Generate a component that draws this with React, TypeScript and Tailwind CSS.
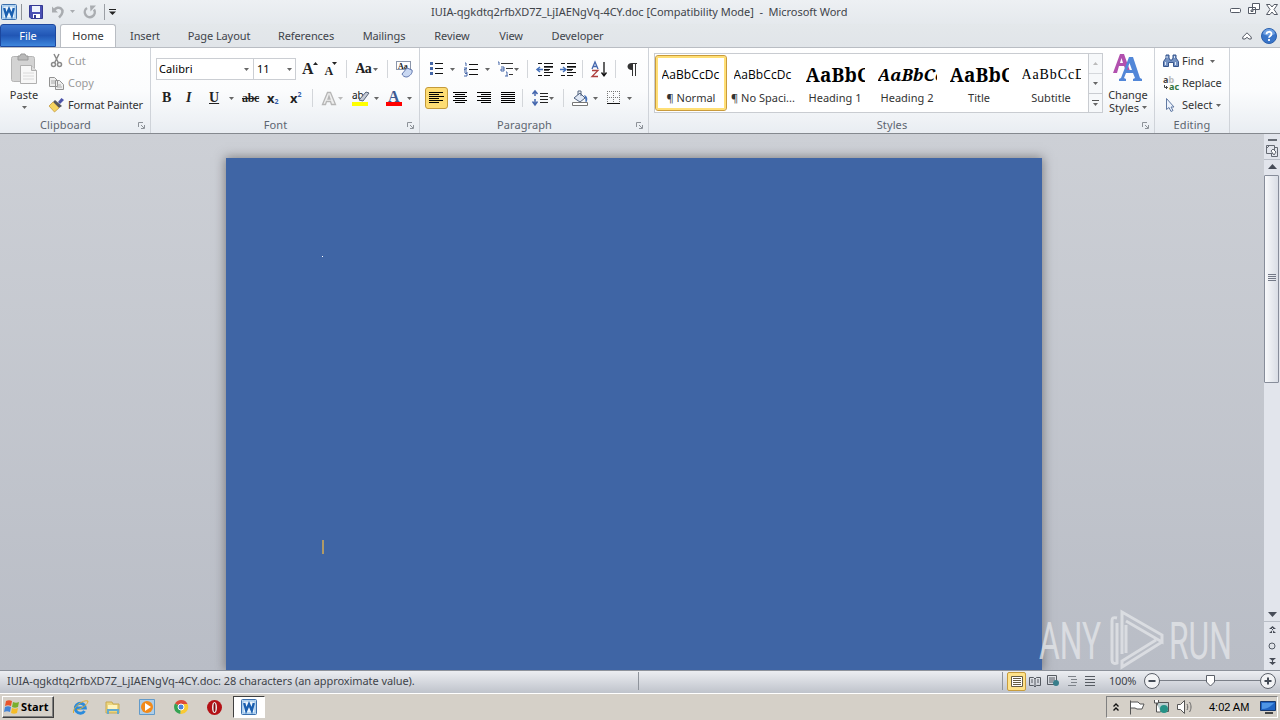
import React from 'react';

type IconProps = { w: number; h: number; className?: string; children: React.ReactNode };

const Icon = ({ w, h, className = '', children }: IconProps) => (
  <svg width={w} height={h} viewBox={`0 0 ${w} ${h}`} className={`block shrink-0 overflow-visible ${className}`} fill="none">
    {children}
  </svg>
);

const Arrow = ({ className = 'text-[#666]' }: { className?: string }) => (
  <Icon w={5} h={3} className={className}>
    <path d="M0 0h5L2.5 3z" fill="currentColor" />
  </Icon>
);

const Sep = () => <div className="h-[18px] w-px shrink-0 bg-[#d3d6da]" />;

const WordLogo = () => (
  <Icon w={16} h={16}>
    <rect x=".5" y=".5" width="15" height="15" rx="1" fill="#cfe4f7" stroke="#3a6fae" />
    <rect x="2" y="2" width="12" height="12" fill="#eef6fd" stroke="#8dbbe6" />
    <path d="M3.2 4 5.2 11.5 8 5l2.8 6.5L12.8 4" stroke="#1a5fb0" strokeWidth="2.4" />
  </Icon>
);

const Launcher = () => (
  <Icon w={7} h={7}>
    <path d="M.5 5V.5H5" stroke="#8d9299" />
    <path d="M3 3l3 3M6.5 3v3.500H3" stroke="#8d9299" />
  </Icon>
);

const Lines = ({ rows }: { rows: number[][] }) => (
  <Icon w={15} h={12}>
    {rows.map(([x, w], i) => (
      <rect key={i} x={x} y={i * 2} width={w} height="1" fill="#000" />
    ))}
  </Icon>
);

const leftRows = [[0, 14], [0, 10], [0, 15], [0, 10], [0, 14], [0, 10]];
const centerRows = [[0, 14], [2, 10], [0, 14], [2, 10], [0, 14], [2, 10]];
const rightRows = [[0, 14], [4, 10], [0, 14], [4, 10], [0, 14], [4, 10]];
const fullRows = [[0, 14], [0, 14], [0, 14], [0, 14], [0, 14], [0, 14]];

type GroupProps = { label: string; className: string; launcher?: boolean; children: React.ReactNode };

const Group = ({ label, className, launcher = true, children }: GroupProps) => (
  <div className={`flex h-full shrink-0 flex-col border-r border-[#cfd3d9] ${className}`}>
    <div className="h-[69px] shrink-0">{children}</div>
    <div className="flex h-[16px] items-center text-[#5d6570]">
      <span className="flex-1 text-center tracking-[0.1px]">{label}</span>
      {launcher && (
        <span className="w-[19px] pl-[7px]">
          <Launcher />
        </span>
      )}
    </div>
  </div>
);

const tabs = [
  { name: 'Insert', className: 'ml-[14px] w-[30px]' },
  { name: 'Page Layout', className: 'ml-7 w-[62px]' },
  { name: 'References', className: 'ml-7 w-14' },
  { name: 'Mailings', className: 'ml-7 w-11' },
  { name: 'Review', className: 'ml-7 w-9' },
  { name: 'View', className: 'ml-7 w-[26px]' },
  { name: 'Developer', className: 'ml-[27px] w-[53px]' },
];

const TitleBar = () => (
  <div className="flex h-6 items-start bg-linear-to-b from-[#edf0f3] to-[#e5e9ed]">
    <div className="flex h-6 w-[430px] items-center pb-px pl-px">
      <WordLogo />
      <div className="ml-1 h-4 w-px bg-[#8f9499]" />
      <Icon w={14} h={14} className="ml-[7px]">
        <path d="M.5.5h13v13H2L.5 12z" fill="#4a50b3" stroke="#343992" />
        <path d="M3 1h8v6H3z" fill="#eef3fc" />
        <path d="M4 9h7v4H4z" fill="#fff" />
        <path d="M5 10h2v3H5z" fill="#343992" />
      </Icon>
      <Icon w={14} h={14} className="ml-2">
        <path d="M1 1.5v6h6z" fill="#a9acb0" />
        <path d="M3 5.5C5 2.500 8 2 10 3.500s2.500 5-2 9" stroke="#a9acb0" strokeWidth="2.5" />
      </Icon>
      <Arrow className="ml-[5px] text-[#a9acb0]" />
      <Icon w={14} h={14} className="ml-[8px]">
        <path d="M4 3a5 5 0 1 0 7 1.500" stroke="#aaadb1" strokeWidth="2.5" />
        <path d="M7 .5h6l-5.500 6z" fill="#aaadb1" />
      </Icon>
      <div className="ml-[7px] h-4 w-px bg-[#9b9fa5]" />
      <Icon w={7} h={6} className="ml-1">
        <path d="M0 .5h7" stroke="#222" />
        <path d="M0 2.5h7L3.500 6z" fill="#222" />
      </Icon>
    </div>
    <div className="flex h-6 w-[420px] items-center whitespace-pre pl-px text-[#3f444a]">
      <span className="tracking-[-0.04px]">IUIA-qgkdtq2rfbXD7Z_LjIAENgVq-4CY.doc [Compatibility Mode]  -  Microsoft Word</span>
    </div>
    <div className="ml-auto flex items-center gap-[6px] pt-[3px] pr-[2px]">
      <Icon w={12} h={12}>
        <rect x=".5" y="5.5" width="10" height="4" rx="1" fill="#fff" stroke="#555b66" />
      </Icon>
      <Icon w={12} h={12}>
        <path d="M4.5.5h7v6h-7zM.5 4.500h7v6h-7z" fill="#fff" stroke="#555b66" />
        <path d="M3 7h2v1.500H3z" stroke="#555b66" />
      </Icon>
      <Icon w={12} h={11}>
        <path d="M.5.5H4l2 2.500L8 .5h3.500L8 5.500l3.500 5H8L6 8l-2 2.500H.5l3.500-5z" fill="#fff" stroke="#555b66" />
      </Icon>
    </div>
  </div>
);

const TabBar = () => (
  <div className="flex h-[23px] bg-linear-to-b from-[#e4e8eb] to-[#e1e5e9] text-[#3f444a]">
    <div className="flex h-full w-14 items-center justify-center rounded-t-[3px] border border-[#1c479e] bg-linear-to-b from-[#3c75ce] via-[#2156b5] to-[#3e86dc] text-white">
      File
    </div>
    <div className="ml-1 flex h-6 w-14 items-center justify-center rounded-t-[3px] border border-b-0 border-[#b9bdc3] bg-white pb-px text-[#333]">
      Home
    </div>
    {tabs.map((tab) => (
      <div
        key={tab.name}
        className={`flex h-full items-center justify-center whitespace-nowrap tracking-[-0.1px] ${tab.className}`}
      >
        {tab.name}
      </div>
    ))}
    <div className="ml-auto flex items-center gap-[9px] pr-[3px]">
      <Icon w={10} h={8}>
        <path d="M.8 5 5 .8 9.200 5v2H7L5 5.300 3 7H.8z" fill="#fff" stroke="#555b66" />
      </Icon>
      <Icon w={16} h={16}>
        <circle cx="8" cy="8" r="7.5" fill="#3975c9" stroke="#2b60ac" />
        <path d="M2 6a6 5 0 0 1 12 0c-3 2-8 2-12 0z" fill="#6ea0e2" />
        <path d="M5.5 6.200C5.500 3 10.500 3 10.500 6c0 2-2.500 1.800-2.500 3.800M8 11v2" stroke="#fff" strokeWidth="1.8" />
      </Icon>
    </div>
  </div>
);

const ClipboardGroup = () => (
  <Group label="Clipboard" className="w-[151px]">
    <div className="flex h-full">
      <div className="flex w-12 flex-col items-center pt-[5px]">
        <Icon w={28} h={31}>
          <rect x="1.5" y="3.5" width="23" height="25" rx="2" fill="#d3d3d3" stroke="#b5b5b5" />
          <path d="M8 3h2l1-2h4l1 2h2v4H8z" fill="#b9b9b9" stroke="#999" />
          <path d="M10.5 12.500h11l5 5v13h-16z" fill="#f7f7f7" stroke="#b0b0b0" />
          <path d="M21.5 12.500v5h5" fill="#ddd" stroke="#b0b0b0" />
          <path d="M13 20h11M13 23h11M13 26h11" stroke="#dadada" />
        </Icon>
        <span className="mt-[3px] leading-[15px] text-[#333]">Paste</span>
        <Arrow className="mt-[4px] text-[#666]" />
      </div>
      <div className="flex flex-col pt-[2px] pl-[1px] text-[#9a9a9a]">
        <div className="flex h-[22px] items-center gap-1 pl-px">
          <Icon w={14} h={14}>
            <path d="M4 0l4.500 9M9 0 4.500 9" stroke="#8a8a8a" strokeWidth="1.5" />
            <circle cx="3.5" cy="10.5" r="2" stroke="#8a8a8a" strokeWidth="1.5" />
            <circle cx="9.5" cy="10.5" r="2" stroke="#8a8a8a" strokeWidth="1.5" />
          </Icon>
          Cut
        </div>
        <div className="flex h-[22px] items-center gap-1">
          <Icon w={15} h={14}>
            <path d="M.5 1.500h5l3 3v6h-8zM6.500 4.500h4l4 4v5h-8z" fill="#eee" stroke="#929292" />
            <path d="M2 5h4M2 7h4M8 9h4M8 11h5" stroke="#aaa" />
          </Icon>
          Copy
        </div>
        <div className="flex h-[22px] items-center gap-1 text-[#333]">
          <Icon w={15} h={14}>
            <path d="M9 4 12.500 0 15 2l-4 4z" fill="#4c54a9" />
            <path d="M6 2l7 6-3 2-6-6z" fill="#55575e" />
            <path d="M4 4l6 6-4.500 4L0 8z" fill="#f6d460" stroke="#bd923b" strokeWidth=".7" />
          </Icon>
          <span className="tracking-[-0.18px]">Format Painter</span>
        </div>
      </div>
    </div>
  </Group>
);

const glyph = 'font-[Liberation_Serif,serif] font-bold text-[#222]';

const FontGroup = () => (
  <Group label="Font" className="w-[269px]">
    <div className="flex h-[42px] items-center pl-[5px] text-black">
      <div className="flex h-[22px] w-[98px] items-center justify-between border border-[#cbced3] bg-white pr-1 pl-[2px]">
        <span className="tracking-[0.1px]">Calibri</span>
        <Arrow />
      </div>
      <div className="-ml-px flex h-[22px] w-[43px] items-center justify-between border border-[#cbced3] bg-white pr-[3px] pl-[3px]">
        11
        <Arrow />
      </div>
      <span className={`ml-[6px] flex text-[16px] leading-[18px] ${glyph}`}>
        A
        <Icon w={5} h={3} className="mt-[2px] -ml-px">
          <path d="M0 3h5L2.500 0z" fill="#222" />
        </Icon>
      </span>
      <span className={`ml-[7px] flex pt-[3px] text-[12px] leading-[16px] ${glyph}`}>
        A
        <Icon w={5} h={3} className="-mt-px -ml-px">
          <path d="M0 0h5L2.500 3z" fill="#222" />
        </Icon>
      </span>
      <div className="ml-[9px]"><Sep /></div>
      <span className={`ml-[8px] w-[18px] text-[14px] tracking-[-0.5px] ${glyph}`}>Aa</span>
      <Arrow />
      <div className="ml-[9px]"><Sep /></div>
      <Icon w={17} h={17} className="ml-2">
        <rect x=".5" y=".5" width="14" height="8" fill="#fff" stroke="#8b96aa" />
        <text x="2" y="8" fontSize="8" fontFamily="Liberation Serif, serif" fontWeight="bold" fill="#222">Aa</text>
        <path d="M6 13l5-6 5 2c1 3-2 6-5 7-3 0-4-1-5-3z" fill="#c9d8f2" stroke="#6278ae" />
      </Icon>
    </div>
    <div className="flex h-[16px] items-center pl-[11px]">
      <span className={`w-[10px] text-[14px] ${glyph}`}>B</span>
      <span className={`ml-[14px] w-[8px] text-[14px] italic ${glyph}`}>I</span>
      <span className={`ml-[15px] w-[11px] text-[14px] underline ${glyph}`}>U</span>
      <Arrow className="ml-[9px] text-[#666]" />
      <span className={`ml-[8px] w-[17px] text-[12px] tracking-[-0.3px] line-through ${glyph}`}>abc</span>
      <span className="ml-[8px] flex w-[14px] items-end text-[13px] leading-[14px] font-bold text-[#222]">
        x<span className="text-[7px] leading-[7px] text-[#315aa7]">2</span>
      </span>
      <span className="ml-[9px] flex w-[13px] items-start text-[13px] leading-[14px] font-bold text-[#222]">
        x<span className="text-[7px] leading-[7px] text-[#315aa7]">2</span>
      </span>
      <div className="ml-[9px]"><Sep /></div>
      <Icon w={16} h={15} className="ml-2">
        <path d="M1.5 13.500 6.500 1.500h3l5 12h-4l-1-3h-4l-1 3zM7 8h2L8 5z" fill="#eee" stroke="#b6b6b6" strokeWidth="1.3" />
      </Icon>
      <Arrow className="ml-px text-[#bbb]" />
      <Icon w={18} h={17} className="ml-[9px]">
        <text x="0" y="9" fontSize="10" fontFamily="Noto Sans, sans-serif" fill="#111">ab</text>
        <path d="M7 10 14 2l3 1-6 8z" fill="#c5cbd7" stroke="#596477" />
        <path d="M0 12h16v4H0z" fill="#ff0" />
      </Icon>
      <Arrow className="ml-[4px] text-[#666]" />
      <Icon w={16} h={17} className="ml-[7px]">
        <text x="2" y="12" fontSize="16" fontFamily="Liberation Serif, serif" fontWeight="bold" fill="#3e5b92">A</text>
        <path d="M0 12h16v4H0z" fill="#f00" />
      </Icon>
      <Arrow className="ml-[5px] text-[#666]" />
    </div>
  </Group>
);

const Indent = ({ right = false }: { right?: boolean }) => (
  <Icon w={16} h={13}>
    <path d="M1 .5h4M7 .5h9M7 3.500h9M7 6.500h6M7 9.500h9M1 12.500h4M7 12.500h6" stroke="#111" />
    <path d="M7 4.500h9M7 7.500h5" stroke="#111" strokeWidth=".7" />
    <path d={right ? 'M0 6.5h5M3 4l3 2.5L3 9' : 'M6 6.5H1M3 4 0 6.5 3 9'} stroke="#4470b9" strokeWidth="1.5" />
  </Icon>
);

const ParagraphGroup = () => (
  <Group label="Paragraph" className="w-[229px]">
    <div className="flex h-[42px] items-center pl-[10px]">
      <Icon w={14} h={14}>
        <path d="M0 0h3v3H0zM0 5h3v3H0zM0 10h3v3H0z" fill="#4567a8" />
        <path d="M5 1.500h8M5 6.500h8M5 11.500h8" stroke="#111" />
      </Icon>
      <Arrow className="ml-[6px] text-[#666]" />
      <Icon w={15} h={15} className="ml-[9px]">
        <path d="M1 1h1v3M0 6h3L0 8h3M0 10h3v1.500H1h2V14H0" stroke="#4567a8" />
        <path d="M5 2.500h9M5 7.500h9M5 12.500h9" stroke="#111" />
      </Icon>
      <Arrow className="ml-[6px] text-[#666]" />
      <Icon w={16} h={15} className="ml-[7px]">
        <path d="M1 0h1v3M4 5h3v4H4V7h3M9 10h1v4M8 14h3" stroke="#4567a8" />
        <path d="M4 1.500h12M9 6.500h7M12 12.500h4" stroke="#333" />
      </Icon>
      <Arrow className="ml-px text-[#666]" />
      <div className="ml-[8px]"><Sep /></div>
      <div className="ml-[9px] flex gap-[7px]">
        <Indent />
        <Indent right />
      </div>
      <div className="ml-[6px]"><Sep /></div>
      <Icon w={17} h={17} className="ml-[8px]">
        <path d="M1 8 4 1l3 7M2 5.500h4" stroke="#4567ae" strokeWidth="1.3" />
        <path d="M1 9.500h6l-6 6h6" stroke="#ae403f" strokeWidth="1.3" />
        <path d="M13 1v13M10.500 11.500 13 15l2.500-3.500" stroke="#111" strokeWidth="1.3" />
      </Icon>
      <div className="ml-[7px]"><Sep /></div>
      <Icon w={11} h={13} className="ml-[11px]">
        <path d="M5 0h5v1H9v12H8V1H6v12H5V7C-1 7-1 0 5 0z" fill="#333" />
      </Icon>
    </div>
    <div className="flex h-[16px] items-center pl-[5px]">
      <div className="flex h-[22px] w-[23px] shrink-0 items-center justify-center rounded-[3px] border border-[#c49a3a] bg-[#fddc73]">
        <Lines rows={leftRows} />
      </div>
      <div className="ml-[5px] flex gap-[9px]">
        <Lines rows={centerRows} />
        <Lines rows={rightRows} />
        <Lines rows={fullRows} />
      </div>
      <div className="ml-[6px]"><Sep /></div>
      <Icon w={16} h={16} className="ml-[9px]">
        <path d="M3 1v5M.5 4 3 1l2.500 3M3 9v5M.5 11.500 3 15l2.500-3.500" stroke="#4567ae" strokeWidth="1.5" />
        <path d="M8 3.500h8M8 6.500h8M8 9.500h8M8 12.500h8" stroke="#222" />
      </Icon>
      <Arrow className="ml-px text-[#666]" />
      <div className="ml-[9px]"><Sep /></div>
      <Icon w={17} h={17} className="ml-[8px]">
        <path d="M2 8 8 3l5 5-5 4z" fill="#e0e8f5" stroke="#50627f" />
        <path d="M6 5V1h3v5" stroke="#50627f" />
        <path d="M12 5c4 1 4 5 2 8-1-2 0-4-2-8z" fill="#4470b9" />
        <path d="M.5 12.500h15v3H.5z" fill="#fff" stroke="#777" />
      </Icon>
      <Arrow className="ml-[4px] text-[#666]" />
      <Icon w={14} h={14} className="ml-[9px]">
        <path d="M.5 0v12M6.500 0v12M12.500 0v12M0 .5h13M0 6.500h13" stroke="#777" strokeDasharray="1 1" />
        <path d="M0 12.500h13" stroke="#111" />
      </Icon>
      <Arrow className="ml-[6px] text-[#666]" />
    </div>
  </Group>
);

const styleCards = [
  { name: '¶ Normal', sample: 'AaBbCcDc', className: "font-['Open_Sans',sans-serif] text-[12px] tracking-[0.1px]" },
  { name: '¶ No Spaci...', sample: 'AaBbCcDc', className: "font-['Open_Sans',sans-serif] text-[12px] tracking-[0.1px]" },
  { name: 'Heading 1', sample: 'AaBbC', className: 'font-[Noto_Serif,DejaVu_Serif,serif] text-[19px] font-bold tracking-[0.2px]' },
  { name: 'Heading 2', sample: 'AaBbCc', className: 'font-[Noto_Serif,DejaVu_Serif,serif] text-[17px] font-bold italic' },
  { name: 'Title', sample: 'AaBbC', className: 'font-[Noto_Serif,DejaVu_Serif,serif] text-[19px] font-bold tracking-[0.2px]' },
  { name: 'Subtitle', sample: 'AaBbCcD', className: 'font-[Liberation_Serif,serif] text-[14px] tracking-[0.9px]' },
];

const StylesGroup = () => (
  <Group label="Styles" className="w-[506px]">
    <div className="flex h-full pt-[5px] pl-[5px]">
      <div className="flex h-[60px] w-[449px] border border-[#c9ccd1] bg-white">
        {styleCards.map((card, i) => (
          <div
            key={card.name}
            className={`mt-px flex h-[56px] w-[72px] shrink-0 flex-col items-center ${
              i === 0 ? 'rounded-[3px] border border-[#c99b3c] p-0 inset-ring-2 inset-ring-[#ffdf76]' : 'p-px'
            }`}
          >
            <div className={`flex h-[34px] w-[59px] items-center overflow-hidden pt-[4px] whitespace-nowrap text-black ${card.className}`}>
              {card.sample}
            </div>
            <span className="leading-[15px] text-[#333]">{card.name}</span>
          </div>
        ))}
        <div className="ml-auto flex w-[14px] flex-col border-l border-[#c9ccd1] bg-[#f6f8fa]">
          <div className="flex h-5 items-center justify-center border-b border-[#d5d8dc]">
            <Icon w={5} h={3}>
              <path d="M0 3h5L2.500 0z" fill="#bbb" />
            </Icon>
          </div>
          <div className="flex h-5 items-center justify-center border-b border-[#c9ccd1]">
            <Arrow />
          </div>
          <div className="flex flex-1 flex-col items-center justify-center gap-[2px]">
            <div className="h-px w-[7px] bg-[#555]" />
            <Arrow />
          </div>
        </div>
      </div>
      <div className="flex w-[50px] flex-col items-center leading-[13px] text-[#333]">
        <Icon w={30} h={30}>
          <path d="M0 20 7 1h4l6 17h-4l-2-5H6l-2 7zM7 10h3L8.500 5z" fill="#b150ae" fillRule="evenodd" />
          <path d="M6 28v-2l2-1 8-21h4l7 21 2 1v2h-9v-2l2-1-2-5h-7l-2 5 2 1v2zM14 17h5l-2.500-7z" fill="#5287d8" fillRule="evenodd" />
        </Icon>
        <span className="mt-[5px]">Change</span>
        <span className="flex items-center gap-[3px]">Styles <Arrow /></span>
      </div>
    </div>
  </Group>
);

const EditingGroup = () => (
  <Group label="Editing" className="w-[75px]" launcher={false}>
    <div className="flex flex-col pt-[2px] pl-[8px] text-[#333]">
      <div className="flex h-[22px] items-center">
        <Icon w={16} h={14}>
          <path d="M.5 12.500v-5L3 4V1h3v3l1 2h2l1-2V1h3v3l2.500 3.500v5h-5v-4h-5v4z" fill="#7290c1" stroke="#35548d" />
          <path d="M2.5 8v3M12.500 8v3M4 2v2M11.500 2v2" stroke="#dce6f5" />
        </Icon>
        <span className="ml-[3px]">Find</span>
        <Arrow className="ml-[6px] text-[#666]" />
      </div>
      <div className="flex h-[22px] items-center">
        <Icon w={16} h={15} className="font-[Noto_Sans,sans-serif] font-bold">
          <text x="0" y="7" fontSize="9" fill="#444">a<tspan fill="#bbb">b</tspan></text>
          <text x="6" y="14" fontSize="9" fill="#31753d">ac</text>
          <path d="M1.5 9v2.500h3M3 10l1.500 1.500L3 13" stroke="#444" />
        </Icon>
        <span className="ml-[3px] tracking-[-0.1px]">Replace</span>
      </div>
      <div className="flex h-[22px] items-center">
        <Icon w={16} h={14}>
          <path d="M3.500.5v11l2.500-2 2 4 2-1-2-3.500h3z" fill="#edf3fc" stroke="#6079a3" />
        </Icon>
        <span className="ml-[3px]">Select</span>
        <Arrow className="ml-[3px] text-[#666]" />
      </div>
    </div>
  </Group>
);

const Ribbon = () => (
  <div className="flex h-[87px] border-t border-b border-t-[#b9bdc3] border-b-[#85898f] bg-linear-to-b from-white via-[#fbfcfd] to-[#e9edf2]">
    <ClipboardGroup />
    <FontGroup />
    <ParagraphGroup />
    <StylesGroup />
    <EditingGroup />
  </div>
);

const Scrollbar = () => (
  <div className="flex w-4 shrink-0 flex-col items-center bg-[#e2e5ec]">
    <div className="mt-[5px] h-[2px] w-[9px] bg-[#676c75]" />
    <Icon w={12} h={12} className="mt-[4px]">
      <path d="M.5.5h8v8h-8zM8.500 2.500h3v9h-6v-3" stroke="#656a73" />
      <path d="m1 3 2-2M5 6l2-2 3 3-2 3z" fill="#fff" stroke="#656a73" />
    </Icon>
    <div className="mt-[2px] h-px w-4 bg-[#b9bec7]" />
    <Icon w={9} h={5} className="mt-[4px]">
      <path d="M0 5 4.500 0 9 5z" fill="#484d58" />
    </Icon>
    <div className="mt-[6px] mr-px flex h-[208px] w-[15px] flex-col items-center justify-center gap-px rounded-[1px] border border-[#878d9a] bg-linear-to-r from-[#f8f9fb] to-[#d9dde5] pb-[3px]">
      <div className="h-px w-[8px] bg-[#737987]" />
      <div className="h-px w-[8px] bg-[#737987]" />
      <div className="h-px w-[8px] bg-[#737987]" />
      <div className="h-px w-[8px] bg-[#737987]" />
    </div>
    <Icon w={9} h={5} className="mt-auto">
      <path d="M0 0h9L4.500 5z" fill="#484d58" />
    </Icon>
    <div className="mt-[4px] h-px w-4 bg-[#b9bec7]" />
    <Icon w={7} h={7} className="mt-[4px]">
      <path d="M0 3h7L3.500 0zM0 7h7L3.500 4zM3 2h1v5H3z" fill="#484d58" />
    </Icon>
    <Icon w={8} h={8} className="mt-[9px]">
      <circle cx="4" cy="4" r="3" stroke="#555b66" fill="#dfe2e8" />
    </Icon>
    <Icon w={7} h={7} className="mt-[8px] mb-[5px]">
      <path d="M0 0h7L3.500 3zM0 4h7L3.500 7zM3 0h1v5H3z" fill="#484d58" />
    </Icon>
  </div>
);

const Watermark = () => (
  <Icon w={194} h={62} className="absolute bottom-0 left-[1038px] opacity-75">
    <g fontSize="51" fontFamily="Roboto, sans-serif" fill="#e5e7ea">
      <text x="1" y="51" textLength="62" lengthAdjust="spacingAndGlyphs">ANY</text>
      <text x="131" y="51" textLength="63" lengthAdjust="spacingAndGlyphs">RUN</text>
    </g>
    <path
      d="M79 10c-4-1-5 0-5 3v39c0 3 2 4 5 3V15M84 46V4l40 23v7L88 13M124 34 84 59v-6l34-21M88 17v28"
      stroke="#e5e7ea"
      strokeWidth="3"
    />
  </Icon>
);

const Document = () => (
  <div className="relative flex h-[536px] overflow-hidden bg-linear-to-b from-[#cdd0d6] to-[#b9bdc6]">
    <div className="flex flex-1 pt-6 pl-[226px]">
      <div className="h-[512px] w-[816px] bg-[#3f65a5] pt-[98px] pl-[96px] shadow-[0_0_10px_1px_rgba(70,65,65,0.55)]">
        <div className="h-px w-px bg-white" />
        <div className="mt-[283px] h-[14px] w-[2px] bg-[#b09a67]" />
      </div>
    </div>
    <Scrollbar />
    <Watermark />
  </div>
);

const StatusBar = () => (
  <div className="flex h-[23px] items-center border-t border-[#8d929b] bg-linear-to-b from-[#eceef2] to-[#bfc3cb] pb-[2px] text-[#3f444a]">
    <span className="w-[638px] pl-[7px] tracking-[-0.08px]">IUIA-qgkdtq2rfbXD7Z_LjIAENgVq-4CY.doc: 28 characters (an approximate value).</span>
    <div className="h-[18px] w-px bg-[#8f949c]" />
    <div className="ml-[363px] h-[18px] w-px bg-[#8f949c]" />
    <div className="ml-1 flex h-[19px] w-[19px] items-center justify-center rounded-[2px] border border-[#c79c3d] bg-[#ffe38a]">
      <Icon w={12} h={11}>
        <path d="M.5.5h11v10H.5z" fill="#fff" stroke="#665c43" />
        <path d="M2 2.500h8M2 4.500h8M2 6.500h8M2 8.500h8" stroke="#665c43" />
      </Icon>
    </div>
    <Icon w={12} h={11} className="ml-[3px]">
      <path d="M.5 1.500h4L6 3l1.500-1.500h4v8h-4L6 11 4.500 9.500h-4zM6 3v8M2 4h2M2 6h2M8 4h2M8 6h2" stroke="#565b62" />
    </Icon>
    <Icon w={13} h={12} className="ml-[6px]">
      <path d="M.5.5h9v9h-9zM2 3h6M2 5h6M2 7h4" stroke="#565b62" />
      <circle cx="9" cy="8" r="3" fill="#397e8b" />
    </Icon>
    <Icon w={11} h={10} className="ml-[7px]">
      <path d="M1 .5h8M4 3.500h6M4 6.500h6M1 9.500h8" stroke="#7d8289" />
    </Icon>
    <Icon w={10} h={10} className="ml-[7px]">
      <path d="M0 .5h10M0 3.500h10M0 6.500h10M0 9.500h10" stroke="#565b62" />
    </Icon>
    <span className="ml-[14px] w-[28px] tracking-[-0.2px]">100%</span>
    <Icon w={134} h={18} className="ml-[6px]">
      <path d="M16 8.500h104M67.500 5v8" stroke="#7b8088" />
      <circle cx="9" cy="9" r="7.5" fill="#f2f3f5" stroke="#5b6069" />
      <path d="M5.5 9h7" stroke="#444b56" strokeWidth="2" />
      <path d="M63.5 3.500h8V10l-4 4-4-4z" fill="#fff" stroke="#5b6069" />
      <circle cx="125" cy="9" r="7.5" fill="#f2f3f5" stroke="#5b6069" />
      <path d="M121.5 9h7M125 5.500v7" stroke="#444b56" strokeWidth="2" />
    </Icon>
  </div>
);

const Taskbar = () => (
  <div className="flex h-[27px] items-center border-t border-white bg-[#d5d0c8] text-black">
    <div className="ml-[2px] flex h-[22px] w-[52px] items-center gap-px border border-t-white border-r-[#404040] border-b-[#404040] border-l-white pl-px shadow-[inset_-1px_-1px_#808080]">
      <Icon w={16} h={14}>
        <path d="M2 1c2-1 4-1 6 0L7 6c-2-1-4-1-6 0z" fill="#e9542c" />
        <path d="M9 2c2 1 4 1 6 0l-1 5c-2 1-4 1-6 0z" fill="#79af2e" />
        <path d="M1 7c2-1 4-1 6 0l-1 5c-2-1-4-1-6 0z" fill="#4484d6" />
        <path d="M8 8c2 1 4 1 6 0l-1 5c-2 1-4 1-6 0z" fill="#f5bc28" />
      </Icon>
      <span className="text-[11px] font-bold tracking-[0.1px]">Start</span>
    </div>
    <Icon w={17} h={16} className="ml-[18px]">
      <path d="M12.5 12a5 5 0 1 1 .8-3H4" stroke="#2b8bdc" strokeWidth="3" />
      <path d="M1.5 14C0 9 11 0 16 2c0 3-5 7-11 9" stroke="#dfae35" strokeWidth="1" />
    </Icon>
    <Icon w={16} h={15} className="ml-[16px]">
      <path d="M1 2h6l1 2h6v9H1z" fill="#ecd57d" stroke="#c7a950" />
      <path d="M3 5h9v4H3z" fill="#fff4bd" />
      <path d="M3 14v-4h10v4" stroke="#63aace" strokeWidth="2" />
    </Icon>
    <Icon w={16} h={16} className="ml-[18px]">
      <path d="M.5.5h15v15H.5z" fill="#aecde7" stroke="#629ac9" />
      <circle cx="8" cy="8" r="6" fill="#f28a1a" />
      <path d="m6 4 6 4-6 4z" fill="#fff" />
    </Icon>
    <Icon w={14} h={14} className="ml-[19px]">
      <path d="M7 7 1 3.500A7 7 0 0 1 13.500 4z" fill="#dd4b39" />
      <path d="M7 7 1 3.500A7 7 0 0 0 6.500 14z" fill="#35a353" />
      <path d="m7 7-.5 7A7 7 0 0 0 13.500 4H7z" fill="#f9ca34" />
      <circle cx="7" cy="7" r="3" fill="#4a83db" stroke="#fff" />
    </Icon>
    <Icon w={15} h={15} className="ml-[19px]">
      <circle cx="7.5" cy="7.5" r="7.5" fill="#b41116" />
      <ellipse cx="7.5" cy="7.5" rx="2.5" ry="5.5" fill="#eee" />
      <ellipse cx="7.5" cy="7.5" rx="1" ry="4.5" fill="#830b10" />
    </Icon>
    <div className="ml-[11px] flex h-[22px] w-[32px] items-center justify-center border border-t-[#404040] border-r-white border-b-white border-l-[#404040] bg-white">
      <WordLogo />
    </div>
    <div className="mr-[2px] ml-auto flex h-[22px] w-[172px] items-center border border-t-[#808080] border-r-white border-b-white border-l-[#808080] pl-[6px]">
      <Icon w={6} h={8}>
        <path d="m.5 3.500 2.500-2.500 2.500 2.500M.5 7.500 3 5l2.500 2.500" stroke="#111" strokeWidth="1.4" />
      </Icon>
      <Icon w={16} h={15} className="ml-[10px]">
        <path d="M1.5.5v14M2 2h7l2 2h4l-2 5H8L6 8H2" fill="#fff" stroke="#555" />
      </Icon>
      <Icon w={16} h={16} className="ml-[8px]">
        <path d="M4.5 3.500h11v9h-11z" fill="#b9cfd0" stroke="#555" />
        <path d="M1.5 1v3h4V1M3.500 4v9h4" fill="#fff" stroke="#555" />
        <circle cx="11" cy="10" r="4" fill="#269286" />
      </Icon>
      <Icon w={16} h={14} className="ml-[8px]">
        <path d="M.5 4.500h3l4-4v13l-4-4h-3z" fill="#fff" stroke="#555" />
        <path d="M10 4c1 2 1 4 0 6M12.500 2c2 3 2 7 0 10" stroke="#666" />
      </Icon>
      <span className="ml-[16px] w-[40px] font-[Liberation_Sans,sans-serif] whitespace-nowrap">4:02 AM</span>
      <Icon w={16} h={13} className="ml-[11px]">
        <path d="M.5.5h15v9H.5z" fill="#1f63c2" stroke="#17386d" />
        <path d="M2 8c5 0 8-2 12-6H2z" fill="#4e95e5" />
        <path d="M5 12h8" stroke="#444" strokeWidth="2" />
      </Icon>
    </div>
  </div>
);

export default function App() {
  return (
    <div className="flex h-[720px] w-[1280px] flex-col overflow-hidden font-['Noto_Sans',sans-serif] text-[11px] leading-[16px]">
      <TitleBar />
      <TabBar />
      <Ribbon />
      <Document />
      <StatusBar />
      <Taskbar />
    </div>
  );
}
